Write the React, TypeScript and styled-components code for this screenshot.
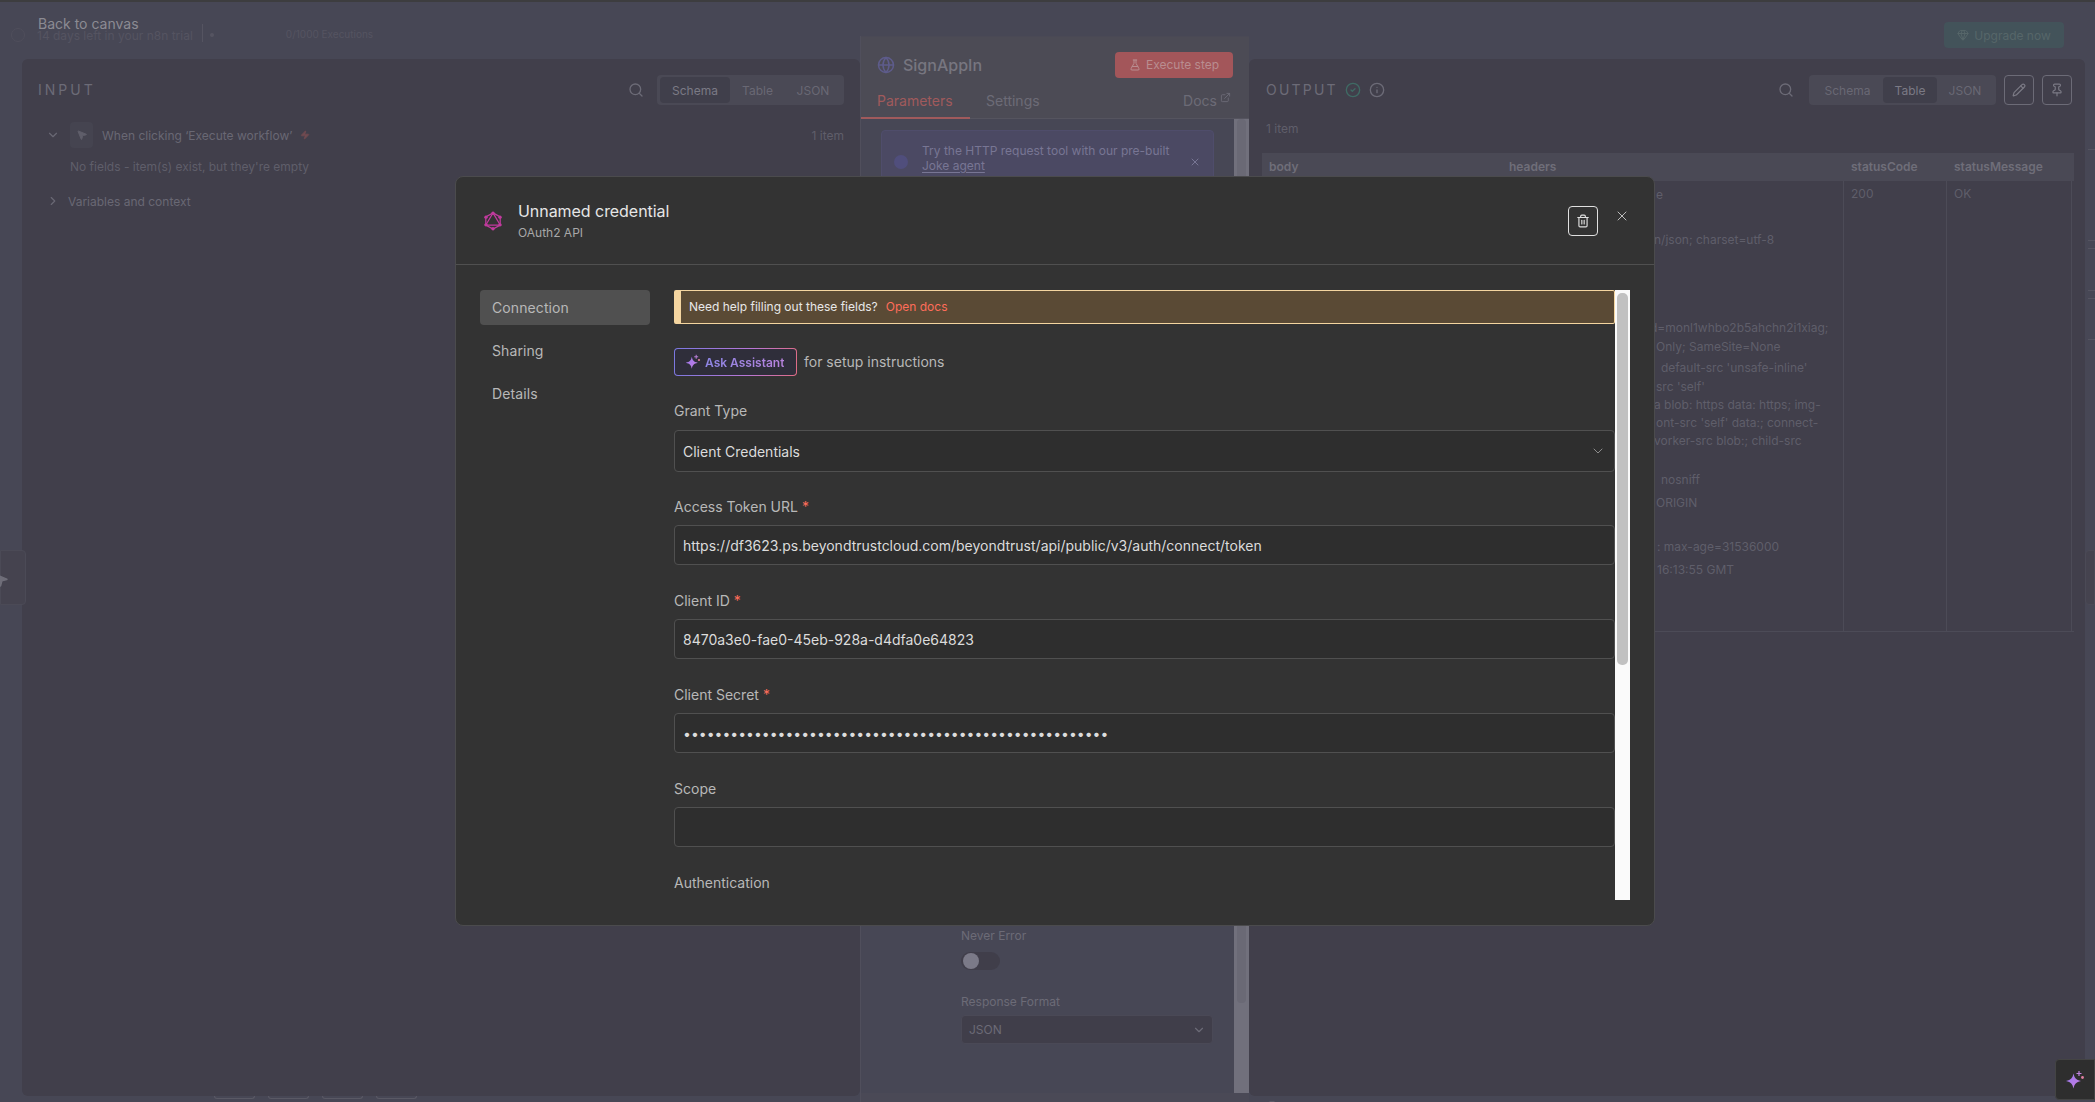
import React from "react";
import styled, { createGlobalStyle } from "styled-components";
import {
  ChevronDown, ChevronRight, CircleCheck, ExternalLink, FlaskConical, Gem, Globe, Info,
  MousePointer2, Pencil, Pin, Search, Trash2, X, Zap,
} from "lucide-react";

const Global = createGlobalStyle`
  html, body { margin: 0; padding: 0; background: #474755; overflow: hidden; }
  * { box-sizing: border-box; }
  body { font-family: Inter, "Noto Sans", "Liberation Sans", sans-serif; }
`;

const Page = styled.div`
  position: relative; width: 2095px; height: 1102px; overflow: hidden;
  display: flex; flex-direction: column; background: #474755; color: #6c6b77;
`;
const TopStrip = styled.div`height: 2px; background: #3d3d3f; flex: none;`;
const TopBar = styled.div`
  height: 34px; flex: none; display: flex; align-items: flex-start;
  padding: 20px 31px 0 11px; font-size: 12px; color: #555461;
`;
const LogoRing = styled.span`width: 14px; height: 14px; margin: 6px 12px 0 0; border-radius: 50%; border: 1px solid #4f4e5b; flex: none;`;
const BackLink = styled.div`
  position: absolute; left: 38px; top: 15px; font-size: 14px; line-height: 18px; color: #8c8b93;
`;
const TrialText = styled.span`line-height: 18px; margin-top: 5px;`;
const TrialDivider = styled.span`width: 1px; height: 18px; background: #555461; margin: 2px 0 0 9px;`;
const TrialDot = styled.span`width: 4px; height: 4px; margin: 11px 0 0 7px; border-radius: 50%; background: #555461;`;
const Executions = styled.span`font-size: 10px; line-height: 18px; margin: 3px 0 0 72px;`;
const Upgrade = styled.div`
  margin-left: auto; margin-top: 0; width: 120px; height: 26px; border-radius: 4px; background: #43535a;
  display: flex; align-items: center; justify-content: center; gap: 5px; font-size: 12px; color: #566669;
`;
const Main = styled.div`flex: 1; display: flex; padding-left: 22px; min-height: 0;`;

const SideColumn = styled.div<{ $w: number }>`
  width: ${(p) => p.$w}px; flex: none; display: flex; flex-direction: column; padding-top: 23px;
`;
const Panel = styled.div`
  height: 1037px; background: #413f4b; border-radius: 6px; display: flex; flex-direction: column; flex: none;
`;
const PanelHead = styled.div`
  height: 46px; margin-top: 8px; flex: none; display: flex; align-items: center; padding: 0 16px; gap: 13px;
`;
const PanelTitle = styled.div<{ $spacing: number }>`
  font-size: 14px; letter-spacing: ${(p) => p.$spacing}px; color: #6c6b77; line-height: 18px;
`;
const Grow = styled.div`flex: 1;`;
const SearchIcon = styled(Search)`color: #6c6b77; flex: none;`;
const Segment = styled.div`
  height: 30px; padding: 2px 3px; background: #4a4955; border-radius: 4px; display: flex; font-size: 12px; color: #696874;
`;
const SegmentItem = styled.div<{ $on?: boolean; $w: number }>`
  width: ${(p) => p.$w}px; height: 26px; display: flex; align-items: center; justify-content: center; border-radius: 4px;
  background: ${(p) => (p.$on ? "#403f4b" : "transparent")}; color: ${(p) => (p.$on ? "#7b7a85" : "#696874")};
`;
const TreeRow = styled.div<{ $top: number }>`
  display: flex; align-items: center; font-size: 12px; color: #696874; height: 26px; margin-top: ${(p) => p.$top}px; padding: 0 16px 0 24px;
`;
const TreeChevronDown = styled(ChevronDown)`flex: none; margin-right: 10px;`;
const TreeChevronRight = styled(ChevronRight)`flex: none; margin-right: 8px;`;
const NodeIcon = styled.div`
  width: 23px; height: 26px; border-radius: 4px; background: #454450; flex: none; margin-right: 9px;
  display: flex; align-items: center; justify-content: center; color: #5f5e6a;
`;
const Bolt = styled(Zap)`color: #704a50; margin-left: 8px; flex: none;`;
const TreeHint = styled.div`font-size: 12px; color: #5f5e6a; padding-left: 48px; line-height: 18px; margin-top: 10px;`;
const ItemCount = styled.div`margin-left: auto; font-size: 12px; color: #5f5e6a;`;
const StubRow = styled.div`display: flex; gap: 13px; padding-left: 192px; flex: none;`;
const Stub = styled.div`width: 41px; height: 3px; border: 1px solid #5a5965; border-top: 0; border-radius: 0 0 4px 4px;`;

const Center = styled.div`
  width: 389px; flex: none; border-left: 1px solid #504f5c; display: flex; flex-direction: column; background: #474755;
`;
const CenterHead = styled.div`background: #4c4b55; flex: none; border-top: 1px solid #4a4955;`;
const CenterTitleRow = styled.div`height: 51px; display: flex; align-items: center; padding: 4px 16px 0 16px;`;
const CenterGlobe = styled(Globe)`color: #5e5c8c; flex: none;`;
const CenterTitle = styled.div`font-size: 16px; color: #777680; margin-left: 8px; font-weight: 500;`;
const RunButton = styled.div`
  margin-left: auto; width: 118px; height: 26px; border-radius: 4px; background: #a3565a; color: #b98d90;
  display: flex; align-items: center; justify-content: center; gap: 5px; font-size: 12px;
`;
const TabRow = styled.div`height: 31px; display: flex; align-items: flex-start; font-size: 14px; color: #6c6b77; border-bottom: 1px solid #55545f;`;
const Tab = styled.div<{ $on?: boolean }>`
  height: 31px; padding: 4px 16px 0 16px; width: ${(p) => (p.$on ? "109px" : "auto")};
  color: ${(p) => (p.$on ? "#a05a5c" : "#6c6b77")}; border-bottom: ${(p) => (p.$on ? "2px solid #a05a5c" : "0")};
`;
const DocsTab = styled.div`margin-left: auto; padding: 4px 18px 0 0; display: flex; gap: 3px; align-items: flex-start; font-size: 14px;`;
const CenterBody = styled.div`flex: 1; display: flex; min-height: 0;`;
const CenterContent = styled.div`flex: 1; display: flex; flex-direction: column; padding: 11px 20px 49px 20px; min-width: 0;`;
const Banner = styled.div`
  height: 60px; background: #4b4963; border: 1px solid #4f4d6b; border-radius: 4px; display: flex; padding: 12px 12px 0 12px; font-size: 12px; line-height: 15px; color: #787694; flex: none;
`;
const BannerDot = styled.span`width: 14px; height: 14px; border-radius: 50%; background: #504e7c; margin: 12px 14px 0 0; flex: none;`;
const BannerText = styled.div`flex: 1;`;
const BannerLink = styled.div`text-decoration: underline; text-underline-offset: 2px;`;
const BannerClose = styled(X)`margin-top: 13px; flex: none; color: #787694;`;
const LowerGroup = styled.div`margin-top: auto; padding-left: 80px;`;
const SmallLabel = styled.div`font-size: 12px; line-height: 18px; color: #6c6b77;`;
const Toggle = styled.div`width: 39px; height: 18px; margin: 7px 0 23px; background: #403e4a; border-radius: 9px; padding: 1px 2px;`;
const ToggleKnob = styled.div`width: 16px; height: 16px; border-radius: 50%; background: #7b7a88;`;
const FakeSelect = styled.div`
  margin-top: 4px; width: 252px; height: 29px; background: #403e4a; border: 1px solid #4a4956; border-radius: 4px;
  display: flex; align-items: center; justify-content: space-between; padding: 0 6px 0 7px; font-size: 12px; color: #6c6b77;
`;
const Track = styled.div`width: 15px; flex: none; background: #71707c; padding: 0 3px;`;
const Thumb = styled.div`height: 884px; background: #6a6975; border-radius: 4px;`;
const CenterFoot = styled.div`height: 9px; flex: none; background: #4a4956;`;

const OutputHead = styled(PanelHead)`gap: 0; padding: 0 13px 0 17px;`;
const Badge = styled(CircleCheck)`color: #3f6a64; margin-left: 7px; flex: none;`;
const InfoBadge = styled(Info)`color: #6c6b77; margin-left: 8px; flex: none;`;
const OutSearch = styled(SearchIcon)`margin-right: 15px;`;
const SquareBtn = styled.div`
  width: 30px; height: 30px; border: 1px solid #6c6b77; border-radius: 4px; margin-left: 8px;
  display: flex; align-items: center; justify-content: center; color: #7b7a85;
`;
const ItemLine = styled.div`font-size: 12px; color: #5f5e6a; margin: 8px 0 0 17px; line-height: 16px;`;
const TableWrap = styled.div`margin: 16px 11px 0 13px; border-bottom: 1px solid #4c4b57; flex: none;`;
const HeadRow = styled.div`
  display: grid; grid-template-columns: 240px 342px 103px 125px; height: 28px; padding-bottom: 2px; background: #4a4955; font-size: 12px; font-weight: 600; color: #6f6e79; align-items: center;
`;
const HeadCell = styled.div`padding-left: 7px;`;
const BodyRow = styled.div`display: grid; grid-template-columns: 240px 342px 103px 125px; height: 450px; font-size: 12px; color: #5f5e6a;`;
const BodyCell = styled.div<{ $line?: boolean }>`
  padding: 4px 0 0 7px; border-right: ${(p) => (p.$line ? "1px solid #4c4b57" : "0")}; line-height: 18px;
`;
const HeaderLine = styled.div<{ $mt: number; $ml: number }>`
  margin-top: ${(p) => p.$mt}px; padding-left: ${(p) => p.$ml}px; white-space: nowrap; line-height: 18px;
`;
const BottomGlyph = styled.div`flex: none; padding: 1px 0 0 17px; color: #6c6b77;`;
const TickColumn = styled.div`flex: 1; display: flex; flex-direction: column; align-items: flex-end; padding-top: 113px;`;
const Tick = styled.div<{ $mt: number }>`width: 7px; height: 1px; background: #555461; margin-top: ${(p) => p.$mt}px;`;

const EdgeTab = styled.div<{ $right?: boolean }>`
  position: absolute; top: 550px; ${(p) => (p.$right ? "right: 0; border-radius: 4px 0 0 4px;" : "left: 0; border-radius: 0 4px 4px 0;")}
  width: ${(p) => (p.$right ? "10px" : "26px")}; height: 55px; background: #45434f; border: 1px solid #4b4a56;
`;
const EdgeIcon = styled(MousePointer2)`position: absolute; left: -8px; top: 21px; color: #6f6e79; fill: #6f6e79;`;

const AssistantFab = styled.div`
  position: absolute; right: 0; top: 1059px; width: 40px; height: 41px; background: #2e2e2e; border: 1px solid #444;
  border-radius: 4px 0 0 4px; display: flex; align-items: center; justify-content: center;
`;

/* modal */
const Modal = styled.div`
  position: absolute; left: 455px; top: 176px; width: 1200px; height: 750px; background: #333333;
  border: 1px solid #4b4b4d; border-radius: 8px; display: flex; flex-direction: column; overflow: hidden;
`;
const ModalHead = styled.div`
  height: 88px; flex: none; border-bottom: 1px solid #505050; display: flex; align-items: flex-start; padding: 0 0 0 28px;
`;
const HeadIcon = styled.div`margin-top: 34px; width: 18px; flex: none;`;
const HeadText = styled.div`margin: 23px 0 0 16px; flex: 1;`;
const ModalTitle = styled.div`font-size: 16px; line-height: 22px; color: #e6e6e6; letter-spacing: -0.05px;`;
const ModalSub = styled.div`font-size: 12px; line-height: 16px; margin-top: 3px; color: #a8a8a8;`;
const DeleteBtn = styled.div`
  width: 30px; height: 30px; margin-top: 29px; border: 1px solid #e0e0e0; border-radius: 4px; display: flex; align-items: center; justify-content: center; color: #e0e0e0; flex: none;
`;
const CloseBtn = styled.div`width: 16px; height: 16px; margin: 31px 24px 0 16px; color: #bdbdbd; flex: none;`;
const ModalBody = styled.div`flex: 1; display: flex; padding: 25px 24px 0 24px; min-height: 0;`;
const Side = styled.div`width: 170px; flex: none; margin-right: 24px;`;
const SideItem = styled.div<{ $on?: boolean }>`
  height: 35px; margin-bottom: 8px; padding-left: 12px; display: flex; align-items: center; font-size: 14px; border-radius: 4px;
  letter-spacing: 0.1px; color: #b8b8b8; background: ${(p) => (p.$on ? "#505050" : "transparent")};
`;
const ContentRow = styled.div`display: flex; height: 610px; flex: none; width: 956px;`;
const Form = styled.div`width: 941px; overflow: hidden; flex: none;`;
const Callout = styled.div`
  height: 34px; background: #5a4a35; border: 1px solid #f4d5a0; border-left-width: 7px; border-radius: 2px;
  display: flex; align-items: center; padding: 0 0 2px 8px; font-size: 12px; color: #e8e8e8; gap: 8px;
`;
const DocsLink = styled.span`color: #ff6d5a;`;
const AskRow = styled.div`display: flex; align-items: center; margin-top: 24px; font-size: 14px; color: #b8b8b8; gap: 7px;`;
const AskHint = styled.span`margin-top: -2px;`;
const AskButton = styled.div`
  width: 123px; height: 28px; border-radius: 4px; padding: 1px; background: linear-gradient(100deg, #7a78e0 0%, #b877d8 60%, #e06c84 100%);
`;
const AskInner = styled.div`
  width: 100%; height: 100%; border-radius: 3px; background: #2f2e3a; display: flex; align-items: center; padding-left: 10px; gap: 4px; font-size: 12px; font-weight: 600;
`;
const AskLabel = styled.span`
  background: linear-gradient(100deg, #8d86e6, #b983dd); -webkit-background-clip: text; background-clip: text; color: transparent;
`;
const FieldLabel = styled.div<{ $mt: number }>`
  font-size: 14px; line-height: 18px; color: #b8b8b8; margin-top: ${(p) => p.$mt}px;
`;
const Star = styled.span`color: #ff6d5a; margin-left: 4px;`;
const InputBox = styled.div`
  height: 40px; margin-top: 9px; background: #2e2e2e; border: 1px solid #505050; border-radius: 4px;
  display: flex; align-items: center; padding: 0 8px; font-size: 14px; color: #dcdcdc;
`;
const SelectBox = styled(InputBox)`height: 42px; margin-top: 10px; justify-content: space-between;`;
const SelectChevron = styled(ChevronDown)`color: #a0a0a0; flex: none;`;
const ScrollStrip = styled.div`width: 15px; flex: none; background: #fafafa; padding: 3px 2px 0;`;
const ScrollThumb = styled.div`height: 372px; background: #c1c1c1; border-radius: 5px;`;

const Sparkle = ({ size = 16 }: { size?: number }) => {
  const id = React.useId();
  return (
    <svg width={size} height={size} viewBox="0 0 20 20" aria-hidden="true">
      <defs>
        <linearGradient id={id} x1="0" y1="0" x2="1" y2="1">
          <stop offset="0" stopColor="#9a7bf0" />
          <stop offset="1" stopColor="#c67be0" />
        </linearGradient>
      </defs>
      <path d="M8.5 3.5 C9.5 8.2 10.9 9.8 16 11 C10.9 12.2 9.5 13.8 8.5 18.5 C7.5 13.8 6.1 12.2 1 11 C6.1 9.8 7.5 8.2 8.5 3.5Z" fill={`url(#${id})`} />
      <path d="M14 1v5M11.5 3.5h5" stroke="#c084e0" strokeWidth="1.2" />
      <circle cx="17.5" cy="7.5" r="1.4" fill="#e07fa0" />
    </svg>
  );
};

const GraphLogo = () => (
  <svg width="18" height="20" viewBox="0 0 20 22" fill="none" stroke="#c13a9e" strokeWidth="1.4" aria-hidden="true">
    <path d="M10 2 18 6.5v9L10 20 2 15.5v-9Z" />
    <path d="M10 2 18 15.5H2Z" />
    <g fill="#c13a9e" stroke="none">
      <circle cx="10" cy="2.4" r="1.9" /><circle cx="17.8" cy="6.7" r="1.9" /><circle cx="17.8" cy="15.3" r="1.9" />
      <circle cx="10" cy="19.6" r="1.9" /><circle cx="2.2" cy="15.3" r="1.9" /><circle cx="2.2" cy="6.7" r="1.9" />
    </g>
  </svg>
);

const headerLines: { t: string; mt: number; ml: number }[] = [
  { t: "e", mt: 1, ml: 147 },
  { t: "n/json; charset=utf-8", mt: 27, ml: 145 },
  { t: "d=monl1whbo2b5ahchn2i1xiag;", mt: 70, ml: 141 },
  { t: "Only; SameSite=None", mt: 1, ml: 147 },
  { t: "default-src 'unsafe-inline'", mt: 3, ml: 152 },
  { t: "src 'self'", mt: 1, ml: 147 },
  { t: "a blob: https data: https; img-", mt: 0, ml: 145 },
  { t: "ont-src 'self' data:; connect-", mt: 0, ml: 147 },
  { t: "vorker-src blob:; child-src", mt: 0, ml: 145 },
  { t: "nosniff", mt: 21, ml: 152 },
  { t: "ORIGIN", mt: 5, ml: 147 },
  { t: ": max-age=31536000", mt: 26, ml: 148 },
  { t: "16:13:55 GMT", mt: 5, ml: 148 },
];

export default function App() {
  return (
    <Page>
      <Global />
      <TopStrip />
      <TopBar>
        <LogoRing />
        <TrialText>14 days left in your n8n trial</TrialText>
        <TrialDivider />
        <TrialDot />
        <Executions>0/1000 Executions</Executions>
        <Upgrade><Gem size={12} />Upgrade now</Upgrade>
      </TopBar>
      <BackLink>Back to canvas</BackLink>
      <Main>
        <SideColumn $w={838}>
          <Panel>
            <PanelHead>
              <PanelTitle $spacing={3}>INPUT</PanelTitle>
              <Grow />
              <SearchIcon size={16} />
              <Segment>
                <SegmentItem $on $w={70}>Schema</SegmentItem>
                <SegmentItem $w={55}>Table</SegmentItem>
                <SegmentItem $w={56}>JSON</SegmentItem>
              </Segment>
            </PanelHead>
            <TreeRow $top={9}>
              <TreeChevronDown size={14} />
              <NodeIcon><MousePointer2 size={12} fill="currentColor" /></NodeIcon>
              When clicking ‘Execute workflow’
              <Bolt size={10} fill="currentColor" />
              <ItemCount>1 item</ItemCount>
            </TreeRow>
            <TreeHint>No fields - item(s) exist, but they're empty</TreeHint>
            <TreeRow $top={12}>
              <TreeChevronRight size={14} />
              Variables and context
            </TreeRow>
          </Panel>
          <StubRow><Stub /><Stub /><Stub /><Stub /></StubRow>
        </SideColumn>
        <Center>
          <CenterHead>
            <CenterTitleRow>
              <CenterGlobe size={18} />
              <CenterTitle>SignAppIn</CenterTitle>
              <RunButton><FlaskConical size={12} />Execute step</RunButton>
            </CenterTitleRow>
            <TabRow>
              <Tab $on>Parameters</Tab>
              <Tab>Settings</Tab>
              <DocsTab>Docs<ExternalLink size={11} /></DocsTab>
            </TabRow>
          </CenterHead>
          <CenterBody>
            <CenterContent>
              <Banner>
                <BannerDot />
                <BannerText>
                  Try the HTTP request tool with our pre-built
                  <BannerLink>Joke agent</BannerLink>
                </BannerText>
                <BannerClose size={12} />
              </Banner>
              <LowerGroup>
                <SmallLabel>Never Error</SmallLabel>
                <Toggle><ToggleKnob /></Toggle>
                <SmallLabel>Response Format</SmallLabel>
                <FakeSelect>JSON<ChevronDown size={14} /></FakeSelect>
              </LowerGroup>
            </CenterContent>
            <Track><Thumb /></Track>
          </CenterBody>
          <CenterFoot />
        </Center>
        <SideColumn $w={836}>
          <Panel>
            <OutputHead>
              <PanelTitle $spacing={2.2}>OUTPUT</PanelTitle>
              <Badge size={16} />
              <InfoBadge size={16} />
              <Grow />
              <OutSearch size={16} />
              <Segment>
                <SegmentItem $w={71}>Schema</SegmentItem>
                <SegmentItem $on $w={54}>Table</SegmentItem>
                <SegmentItem $w={56}>JSON</SegmentItem>
              </Segment>
              <SquareBtn><Pencil size={14} /></SquareBtn>
              <SquareBtn><Pin size={14} /></SquareBtn>
            </OutputHead>
            <ItemLine>1 item</ItemLine>
            <TableWrap>
              <HeadRow>
                <HeadCell>body</HeadCell>
                <HeadCell>headers</HeadCell>
                <HeadCell>statusCode</HeadCell>
                <HeadCell>statusMessage</HeadCell>
              </HeadRow>
              <BodyRow>
                <BodyCell $line />
                <BodyCell $line>
                  {headerLines.map((l) => (
                    <HeaderLine key={l.t} $mt={l.mt} $ml={l.ml}>{l.t}</HeaderLine>
                  ))}
                </BodyCell>
                <BodyCell $line>200</BodyCell>
                <BodyCell $line>OK</BodyCell>
              </BodyRow>
            </TableWrap>
          </Panel>
          <BottomGlyph><Pin size={12} /></BottomGlyph>
        </SideColumn>
        <TickColumn>
          <Tick $mt={0} /><Tick $mt={90} /><Tick $mt={7} /><Tick $mt={41} /><Tick $mt={7} /><Tick $mt={40} />
        </TickColumn>
      </Main>
      <EdgeTab><EdgeIcon size={16} /></EdgeTab>
      <EdgeTab $right />
      <AssistantFab><Sparkle size={20} /></AssistantFab>
      <Modal>
        <ModalHead>
          <HeadIcon><GraphLogo /></HeadIcon>
          <HeadText>
            <ModalTitle>Unnamed credential</ModalTitle>
            <ModalSub>OAuth2 API</ModalSub>
          </HeadText>
          <DeleteBtn><Trash2 size={14} /></DeleteBtn>
          <CloseBtn><X size={16} strokeWidth={1.5} /></CloseBtn>
        </ModalHead>
        <ModalBody>
          <Side>
            <SideItem $on>Connection</SideItem>
            <SideItem>Sharing</SideItem>
            <SideItem>Details</SideItem>
          </Side>
          <ContentRow>
            <Form>
              <Callout>Need help filling out these fields?<DocsLink>Open docs</DocsLink></Callout>
              <AskRow>
                <AskButton><AskInner><Sparkle size={16} /><AskLabel>Ask Assistant</AskLabel></AskInner></AskButton>
                <AskHint>for setup instructions</AskHint>
              </AskRow>
              <FieldLabel $mt={26}>Grant Type</FieldLabel>
              <SelectBox>Client Credentials<SelectChevron size={16} strokeWidth={1.25} /></SelectBox>
              <FieldLabel $mt={26}>Access Token URL<Star>*</Star></FieldLabel>
              <InputBox>https://df3623.ps.beyondtrustcloud.com/beyondtrust/api/public/v3/auth/connect/token</InputBox>
              <FieldLabel $mt={27}>Client ID<Star>*</Star></FieldLabel>
              <InputBox>8470a3e0-fae0-45eb-928a-d4dfa0e64823</InputBox>
              <FieldLabel $mt={27}>Client Secret<Star>*</Star></FieldLabel>
              <InputBox>{"•".repeat(54)}</InputBox>
              <FieldLabel $mt={27}>Scope</FieldLabel>
              <InputBox />
              <FieldLabel $mt={27}>Authentication</FieldLabel>
            </Form>
            <ScrollStrip><ScrollThumb /></ScrollStrip>
          </ContentRow>
        </ModalBody>
      </Modal>
    </Page>
  );
}
